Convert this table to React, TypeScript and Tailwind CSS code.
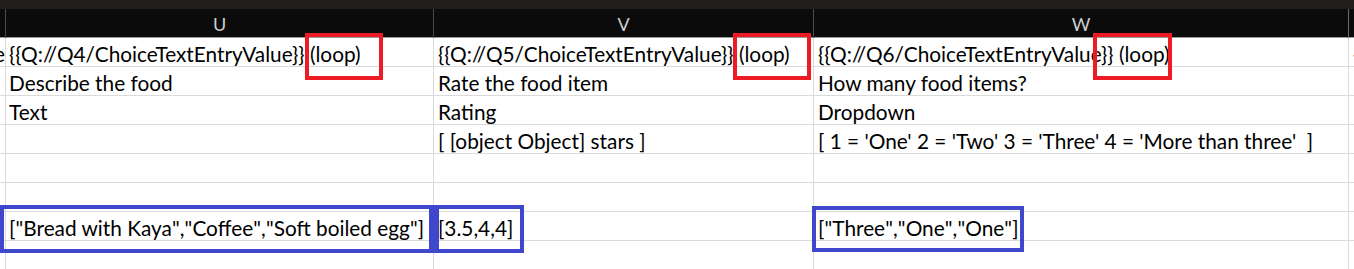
import React from "react";

const font = { fontFamily: '"Lato", "Open Sans", sans-serif' };

const rows: [string, string, string, string, string][] = [
  ["e", "{{Q://Q4/ChoiceTextEntryValue}} (loop)", "{{Q://Q5/ChoiceTextEntryValue}} (loop)", "{{Q://Q6/ChoiceTextEntryValue}} (loop)", "{"],
  ["", "Describe the food", "Rate the food item", "How many food items?", ""],
  ["", "Text", "Rating", "Dropdown", ""],
  ["", "", "[ [object Object] stars ]", "[ 1 = 'One' 2 = 'Two' 3 = 'Three' 4 = 'More than three'  ]", ""],
  ["", "", "", "", ""],
  ["", "", "", "", ""],
  ["", '["Bread with Kaya","Coffee","Soft boiled egg"]', "[3.5,4,4]", '["Three","One","One"]', ""],
  ["", "", "", "", ""],
];

function CellText({ text }: { text: string }) {
  const parts = text.split('"');
  return (
    <span>
      {parts.map((p, i) => (
        <React.Fragment key={i}>
          {i > 0 && <span className="px-[0.1px]">"</span>}
          {p}
        </React.Fragment>
      ))}
    </span>
  );
}

export default function App() {
  return (
    <div className="relative w-[1354px] h-[269px] overflow-hidden bg-white" style={font}>
      <div className="h-[9px] bg-[#211f1c]" />
      <div className="grid grid-cols-[5px_428px_380px_535px_6px] h-[29px] bg-[#0b0b0b] border-b border-[#9a9a9a] text-[#cfcfcf] text-[18px]">
        <div />
        <div className="border-l border-[#4a4a4a] flex items-center justify-center pt-[2px]">U</div>
        <div className="border-l border-[#4a4a4a] flex items-center justify-center pt-[2px]">V</div>
        <div className="border-l border-[#4a4a4a] flex items-center justify-center pt-[2px]">W</div>
        <div className="border-l border-[#6a6a6a]" />
      </div>
      {rows.map((r, i) => (
        <div key={i} className="grid grid-cols-[5px_428px_380px_535px_6px] h-[29px] border-b border-[#dadada] text-[20.8px] text-black">
          <div className="overflow-hidden flex items-end justify-end leading-[24px]">
            <span>{r[0]}</span>
          </div>
          <div className="border-l border-[#dadada] flex items-end pl-[3px] leading-[24px] whitespace-pre overflow-hidden"><CellText text={r[1]} /></div>
          <div className="border-l border-[#dadada] flex items-end pl-[4px] leading-[24px] whitespace-pre overflow-hidden"><CellText text={r[2]} /></div>
          <div className="border-l border-[#dadada] flex items-end pl-[4px] leading-[24px] whitespace-pre overflow-hidden"><CellText text={r[3]} /></div>
          <div className="border-l border-[#dadada] flex items-end pl-[4px] leading-[24px] whitespace-pre overflow-hidden"><CellText text={r[4]} /></div>
        </div>
      ))}
      {/* red highlight boxes */}
      <div className="absolute left-[305px] top-[33px] w-[78px] h-[47px] border-[4px] border-[#ed1c24]" />
      <div className="absolute left-[733px] top-[33px] w-[78px] h-[47px] border-[4px] border-[#ed1c24]" />
      <div className="absolute left-[1093px] top-[33px] w-[79px] h-[47px] border-[4px] border-[#ed1c24]" />
      {/* blue highlight boxes */}
      <div className="absolute left-0 top-[205px] w-[433px] h-[48px] border-[4px] border-[#3f48cc]" />
      <div className="absolute left-[433px] top-[205px] w-[91px] h-[48px] border-[4px] border-l-[6px] border-[#3f48cc]" />
      <div className="absolute left-[812px] top-[206px] w-[212px] h-[46px] border-[4px] border-[#3f48cc]" />
    </div>
  );
}
